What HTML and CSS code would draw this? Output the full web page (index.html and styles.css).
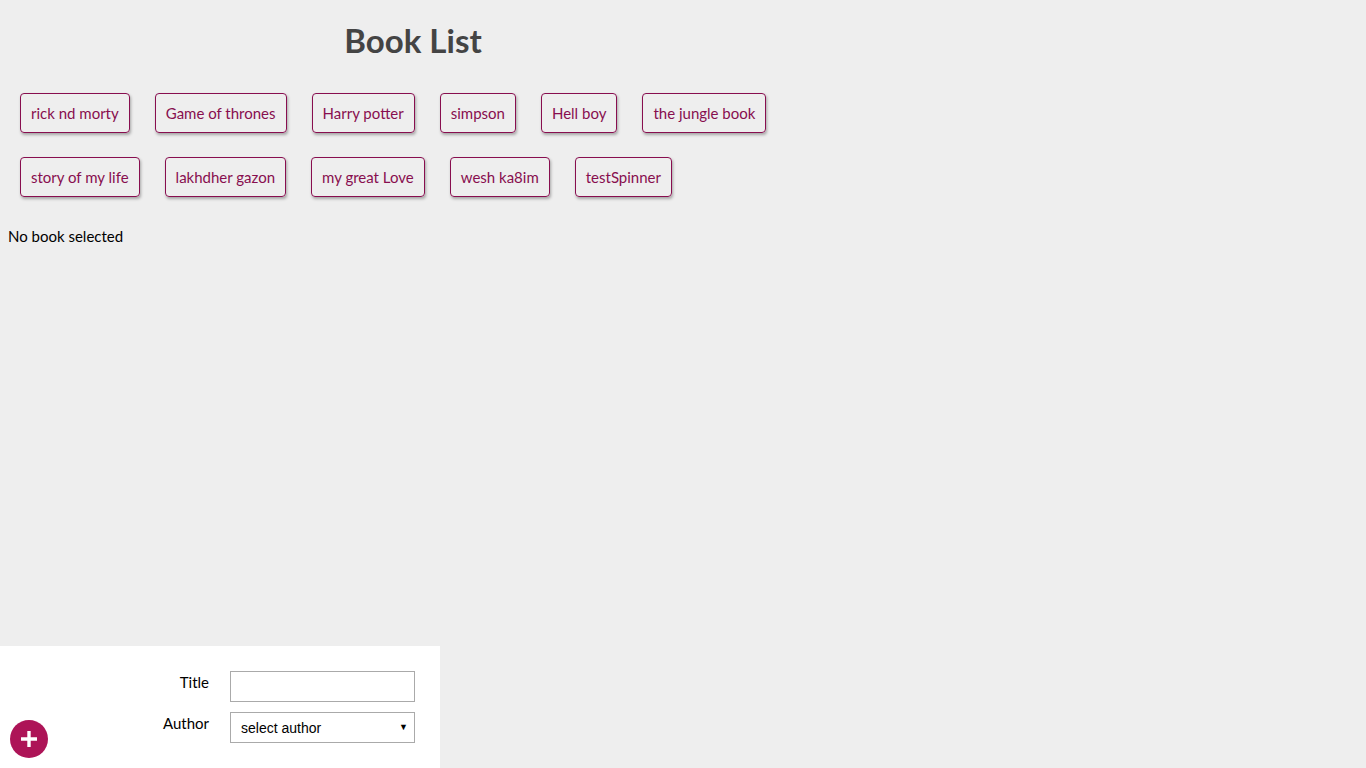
FILE: index.html
```html
<!DOCTYPE html>
<html lang="en">
<head>
<meta charset="utf-8">
<title>Book List</title>
<link rel="stylesheet" href="styles.css">
</head>
<body>
<div class="main">
  <h1 class="title">Book List</h1>
  <ul class="book-list">
    <li class="book">rick nd morty</li>
    <li class="book">Game of thrones</li>
    <li class="book">Harry potter</li>
    <li class="book">simpson</li>
    <li class="book">Hell boy</li>
    <li class="book">the jungle book</li>
    <li class="book">story of my life</li>
    <li class="book">lakhdher gazon</li>
    <li class="book">my great Love</li>
    <li class="book">wesh ka8im</li>
    <li class="book">testSpinner</li>
  </ul>
  <div class="details">No book selected</div>
</div>
<form class="add-book">
  <div class="field">
    <label class="field-label" for="title">Title</label>
    <input class="field-input" id="title" type="text">
  </div>
  <div class="field">
    <label class="field-label" for="author">Author</label>
    <div class="select-wrap">
      <select class="field-select" id="author">
        <option>select author</option>
      </select>
      <span class="select-arrow">&#9660;</span>
    </div>
  </div>
  <button class="add-btn" type="button" aria-label="Add book">
    <svg width="20" height="20" viewBox="0 0 20 20"><path d="M10 2v16M2 10h16" stroke="#fff" stroke-width="3.4" fill="none"/></svg>
  </button>
</form>
</body>
</html>
```
FILE: styles.css
```css
html, body {
  margin: 0;
  padding: 0;
}
body {
  background: #eeeeee;
  font-family: Lato, "Open Sans", sans-serif;
  padding: 8px;
  min-height: 768px;
  box-sizing: border-box;
}
.main {
  width: 810px;
}
.title {
  margin: 12px 0 0 0;
  height: 40px;
  line-height: 40px;
  font-size: 33px;
  font-weight: 700;
  color: #444444;
  text-align: center;
}
.book-list {
  list-style: none;
  margin: 33px 0 0 0;
  padding: 0 12px;
  display: flex;
  flex-wrap: wrap;
  column-gap: 25px;
  row-gap: 24px;
}
.book {
  border: 1px solid #880e4f;
  border-radius: 4px;
  padding: 10px 10px;
  line-height: 18px;
  font-size: 15px;
  color: #880e4f;
  box-shadow: 1px 2px 3px rgba(0, 0, 0, 0.3);
  cursor: pointer;
}
.details {
  margin-top: 28px;
  font-size: 15px;
  line-height: 22px;
  color: #000;
}
.add-book {
  position: fixed;
  left: 0;
  bottom: 0;
  width: 440px;
  height: 122px;
  background: #ffffff;
  box-sizing: border-box;
  padding-top: 25px;
  display: flex;
  flex-direction: column;
  gap: 10px;
}
.field {
  display: grid;
  grid-template-columns: 209px 185px;
  column-gap: 21px;
}
.field-label {
  text-align: right;
  font-size: 15px;
  line-height: 20px;
  margin-top: 1px;
  color: #000;
}
.field-input {
  box-sizing: border-box;
  width: 185px;
  height: 31px;
  border: 1px solid #aaaaaa;
  background: #fff;
  margin: 0;
  padding: 0 10px;
}
.select-wrap {
  position: relative;
  width: 185px;
  height: 31px;
}
.field-select {
  appearance: none;
  -webkit-appearance: none;
  box-sizing: border-box;
  width: 185px;
  height: 31px;
  border: 1px solid #aaaaaa;
  border-radius: 0;
  background: #fff;
  margin: 0;
  padding: 0 10px;
  font-family: "Liberation Sans", Arial, sans-serif;
  font-size: 14px;
  color: #000;
}
.select-arrow {
  position: absolute;
  right: 7px;
  top: 9px;
  font-size: 9px;
  line-height: 12px;
  color: #000;
  pointer-events: none;
}
.add-btn {
  position: absolute;
  left: 10px;
  top: 74px;
  width: 38px;
  height: 38px;
  border-radius: 50%;
  border: none;
  background: #ad1457;
  padding: 0;
  display: flex;
  align-items: center;
  justify-content: center;
  cursor: pointer;
}
```
